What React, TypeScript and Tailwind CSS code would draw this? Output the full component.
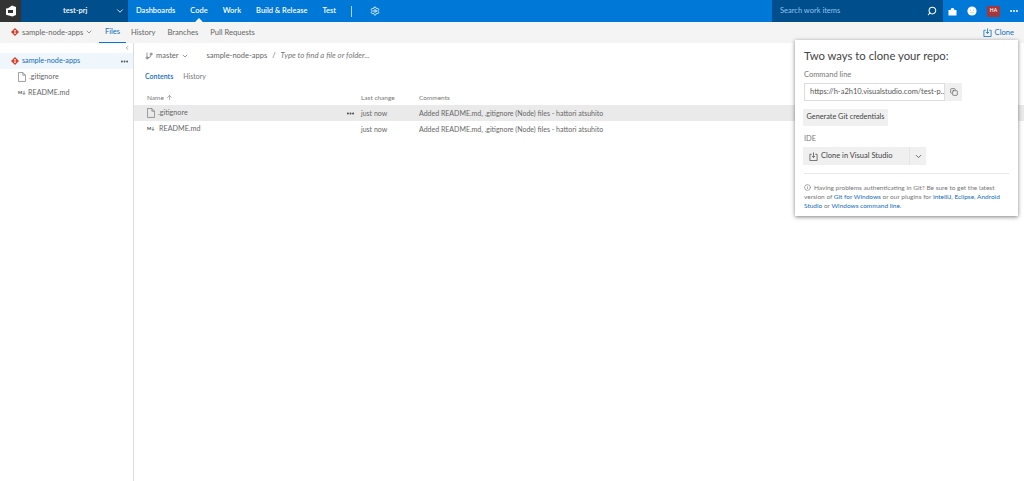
import { ChevronDown, ChevronLeft, ArrowUp, Search, Ellipsis, Copy, GitBranch, Info, Settings } from "lucide-react";

const font = { fontFamily: 'Lato, "Open Sans", sans-serif' };

function GitDiamond({ size = 9 }: { size?: number }) {
  return (
    <svg width={size} height={size} viewBox="0 0 10 10" className="shrink-0">
      <path d="M5 0 10 5 5 10 0 5Z" fill="#d8402a" />
      <circle cx="5" cy="3.4" r="1" fill="#fff" />
      <circle cx="5" cy="6.6" r="1" fill="#fff" />
      <path d="M5 3.4v3.2" stroke="#fff" strokeWidth="0.7" />
    </svg>
  );
}

function FileIcon() {
  return (
    <svg width="8" height="10" viewBox="0 0 9 11" fill="none" stroke="#777" strokeWidth="0.8" className="shrink-0">
      <path d="M.5.5h5l3 3v7h-8zM5.5.5v3h3" />
    </svg>
  );
}

function MdIcon() {
  return <span className="w-[9px] shrink-0 whitespace-nowrap text-[4.500px] leading-none font-bold text-[#444]">M↓</span>;
}

function CloneIcon({ color = "#555" }: { color?: string }) {
  return (
    <svg width="9" height="9" viewBox="0 0 10 10" fill="none" stroke={color} strokeWidth="0.9" className="shrink-0">
      <path d="M3 2.500H1v7h8v-7H7M5 .5v5.500M3.400 4.500 5 6.200l1.600-1.700" />
    </svg>
  );
}

function Row({ icon, name, hover }: { icon: React.ReactNode; name: string; hover?: boolean }) {
  return (
    <div className={`flex h-4 items-center text-[7px] text-[#666] ${hover ? "bg-[#eaeaea]" : ""}`}>
      <div className="flex w-[209px] items-center gap-[3px] pl-[13px] text-[7.200px]">
        {icon}
        <span>{name}</span>
      </div>
      <div className="flex w-[14px] justify-center">{hover && <Ellipsis size={9} strokeWidth={3} className="text-[#333]" />}</div>
      <div className="w-[62px] pl-[4px]">just now</div>
      <div className="flex-1">Added README.md, .gitignore (Node) files - hattori atsuhito</div>
    </div>
  );
}

export default function App() {
  return (
    <div className="relative flex h-[481px] w-[1024px] flex-col overflow-hidden bg-white" style={font}>
      {/* top bar */}
      <div className="flex h-[22px] items-stretch bg-[#0078d7] text-[7.500px] font-semibold text-white">
        <div className="flex w-[21px] items-center justify-center bg-[#333]">
          <svg width="12" height="12" viewBox="0 0 12 12">
            <path d="M7 .5 11 2v8l-3.500 1.500L1 9.800V3.500L3 3.200z" fill="#fff" />
            <path d="M3 5h5v3H3z" fill="#333" />
          </svg>
        </div>
        <div className="flex w-[107px] items-center bg-[#004e8c] pr-[3px]">
          <span className="flex-1 pl-[42px]">test-prj</span>
          <ChevronDown size={10} />
        </div>
        <nav className="flex flex-1 items-center gap-[15px] pl-[8px]">
          <span>Dashboards</span>
          <span className="relative">
            Code
            <span className="absolute -bottom-[7px] left-1/2 h-[5px] w-[5px] -translate-x-1/2 rotate-45 bg-[#f4f4f4]" />
          </span>
          <span>Work</span>
          <span>Build &amp; Release</span>
          <span>Test</span>
          <span className="h-[11px] w-px bg-white/70" />
          <Settings size={10} className="ml-[3px]" />
        </nav>
        <div className="flex w-[171px] items-center justify-between bg-[#004e8c] pl-[8px] pr-[6px] font-normal text-[#8cc4ee]">
          <span>Search work items</span>
          <Search size={10} strokeWidth={2.5} className="-scale-x-100 text-white" />
        </div>
        <div className="flex w-[81px] items-center pl-[5px]">
          <svg width="9" height="9" viewBox="0 0 9 9" className="shrink-0">
            <path d="M.5 3h2l1-2h2l1 2h2v5.500H.5z" fill="#fff" />
          </svg>
          <svg width="10" height="10" viewBox="0 0 10 10" className="ml-[10px] shrink-0">
            <circle cx="5" cy="5" r="4.600" fill="#fff" />
            <circle cx="3.400" cy="4" r="0.500" fill="#8ab" />
            <circle cx="6.600" cy="4" r="0.500" fill="#8ab" />
            <path d="M3.200 6.200q1.800 1.400 3.600 0" fill="none" stroke="#8ab" strokeWidth="0.5" />
          </svg>
          <span className="ml-[10px] flex h-[11px] w-[13px] items-center justify-center bg-[#a4373a] text-[5px]">HA</span>
          <Ellipsis size={10} strokeWidth={3} className="ml-[9px]" />
        </div>
      </div>

      {/* sub nav */}
      <div className="flex h-[21px] items-center whitespace-nowrap bg-[#f4f4f4] text-[7.600px] text-[#666]">
        <div className="flex w-[99px] items-center pl-[11px]">
          <GitDiamond size={8} />
          <span className="ml-[3px]">sample-node-apps</span>
          <ChevronDown size={8} className="ml-[2px]" />
        </div>
        <div className="flex h-full w-[27px] items-center justify-center border-b border-[#0078d7] text-[#106ebe]">Files</div>
        <div className="ml-[5px] flex gap-[12px]">
          <span>History</span>
          <span>Branches</span>
          <span>Pull Requests</span>
        </div>
        <div className="ml-auto mr-[10px] flex items-center gap-[3px] text-[#106ebe]">
          <CloneIcon color="#106ebe" />
          <span>Clone</span>
        </div>
      </div>

      <div className="flex flex-1">
        {/* tree */}
        <aside className="w-[134px] border-r border-[#ddd] text-[7.200px] text-[#666]">
          <div className="flex h-[10px] items-center justify-end pr-[3px]">
            <ChevronLeft size={6} className="text-[#555]" />
          </div>
          <div className="flex h-4 items-center bg-[#eff6fc] pl-[11px] pr-[4px] text-[#106ebe]">
            <GitDiamond size={8} />
            <span className="ml-[3px] flex-1">sample-node-apps</span>
            <Ellipsis size={9} strokeWidth={3} className="text-[#444]" />
          </div>
          <div className="flex h-4 items-center gap-[3px] pl-[18px]">
            <FileIcon />
            <span>.gitignore</span>
          </div>
          <div className="flex h-4 items-center gap-[1px] pl-[18px]">
            <MdIcon />
            <span>README.md</span>
          </div>
        </aside>

        {/* main */}
        <main className="flex-1">
          <div className="flex h-[25px] items-center pl-[11px] text-[7.500px] text-[#666]">
            <GitBranch size={8} />
            <span className="ml-[3px]">master</span>
            <ChevronDown size={8} className="ml-[2px]" />
            <span className="ml-[18px]">sample-node-apps</span>
            <span className="mx-[5px]">/</span>
            <span className="text-[7.800px] italic text-[#777]">Type to find a file or folder...</span>
          </div>
          <div className="flex h-[17px] items-center gap-[10px] pl-[11px] text-[7px]">
            <span className="font-semibold text-[#106ebe]">Contents</span>
            <span className="text-[#777]">History</span>
          </div>
          <div className="mt-[5px] flex h-[15px] items-center text-[6.500px] text-[#777]">
            <div className="flex w-[227px] items-center gap-[2px] pl-[13px]">
              Name
              <ArrowUp size={7} />
            </div>
            <div className="w-[58px]">Last change</div>
            <div>Comments</div>
          </div>
          <Row icon={<FileIcon />} name=".gitignore" hover />
          <Row icon={<MdIcon />} name="README.md" />
        </main>
      </div>

      {/* clone popover */}
      <div className="absolute left-[795px] top-[40px] h-[176px] w-[223px] bg-white px-[9px] pt-[8px] shadow-[0_1px_4px_rgba(0,0,0,0.5)]">
        <h2 className="text-[11.300px] leading-[16px] text-[#444]">Two ways to clone your repo:</h2>
        <div className="mt-[6px] text-[7.500px] leading-[10px] text-[#777]">Command line</div>
        <div className="mt-[3px] flex h-[18px] w-[158px] items-stretch">
          <div className="flex min-w-0 flex-1 items-center overflow-hidden whitespace-nowrap border border-[#ddd] pl-[5px] text-[7.500px] text-[#555]">https://h-a2h10.visualstudio.com/test-p..</div>
          <div className="flex w-[17px] items-center justify-center bg-[#f0f0f0]">
            <Copy size={8} className="text-[#555]" />
          </div>
        </div>
        <div className="mt-[8px] -ml-px flex h-[17px] w-[85px] items-center justify-center whitespace-nowrap bg-[#f0f0f0] text-[7.300px] text-[#444]">Generate Git credentials</div>
        <div className="mt-[8px] text-[7.500px] leading-[10px] text-[#777]">IDE</div>
        <div className="mt-[3px] -ml-px flex h-[18px] w-[123px] items-center whitespace-nowrap bg-[#f0f0f0] text-[7.500px] text-[#444]">
          <div className="flex w-[106px] items-center gap-[3px] pl-[6px]">
            <CloneIcon />
            Clone in Visual Studio
          </div>
          <div className="flex flex-1 items-center justify-center self-stretch border-l border-[#e4e4e4]">
            <ChevronDown size={9} />
          </div>
        </div>
        <div className="mt-[8px] border-t border-[#e8e8e8] pt-[9px] text-[6.500px] leading-[9px] text-[#777]">
          <div className="whitespace-nowrap">
            <Info size={7} className="mr-[3px] inline align-[-1px]" />
            Having problems authenticating in Git? Be sure to get the latest
          </div>
          <div className="whitespace-nowrap">
            version of <span className="text-[#106ebe]">Git for Windows</span> or our plugins for <span className="text-[#106ebe]">IntelliJ</span>, <span className="text-[#106ebe]">Eclipse</span>, <span className="text-[#106ebe]">Android</span>
          </div>
          <div className="whitespace-nowrap">
            <span className="text-[#106ebe]">Studio</span> or <span className="text-[#106ebe]">Windows command line</span>.
          </div>
        </div>
      </div>
    </div>
  );
}
